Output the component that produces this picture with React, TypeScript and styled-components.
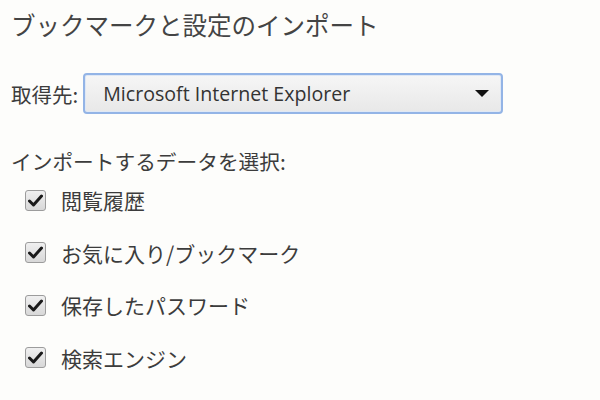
import React from 'react';
import styled, { createGlobalStyle } from 'styled-components';

const GlobalStyle = createGlobalStyle`
    html, body {
        margin:0;
        padding:0;
        background:#fdfdfb;
    }
    body {
        font-family:"Open Sans", "Noto Sans CJK JP", sans-serif;
        color:#3a3a3a;
    }
`;

const Page = styled.div`
    width:600px;
    height:400px;
    box-sizing:border-box;
    padding:9px 0 0 11px;
    overflow:hidden;
`;

const Title = styled.h1`
    margin:0;
    font-size:24.5px;
    font-weight:400;
    line-height:32px;
    color:#444;
    font-family:"Noto Sans CJK JP", sans-serif;
`;

const SourceRow = styled.div`
    display:flex;
    align-items:center;
    gap:5px;
    margin-top:32px;
`;

const Label = styled.span`
    font-size:20.5px;
    line-height:26px;
    font-family:"Noto Sans CJK JP", sans-serif;
    color:#3c3c3c;
`;

const Select = styled.div`
    width:420px;
    height:41px;
    box-sizing:border-box;
    display:flex;
    align-items:center;
    justify-content:space-between;
    padding:0 12px 0 18px;
    border:2px solid #93b4e6;
    border-radius:4px;
    background:linear-gradient(#f6f6f6, #e8e8e8);
    box-shadow:inset 0 0 0 1px #dfe8f5;
    font-size:19.6px;
    color:#333;
    font-family:"Open Sans", sans-serif;
`;

const Caret = styled.span`
    width:0;
    height:0;
    border-left:7px solid transparent;
    border-right:7px solid transparent;
    border-top:7px solid #111;
`;

const Section = styled.div`
    margin-top:34px;
    font-size:20.7px;
    line-height:26px;
    font-family:"Noto Sans CJK JP", sans-serif;
    color:#3c3c3c;
`;

const Items = styled.div`
    display:flex;
    flex-direction:column;
    gap:30.5px;
    margin-top:15px;
    padding-left:14px;
`;

const Item = styled.label`
    display:flex;
    align-items:center;
    gap:15px;
    font-size:21px;
    line-height:22px;
    font-family:"Noto Sans CJK JP", sans-serif;
    color:#3c3c3c;
`;

const Box = styled.span`
    width:21px;
    height:21px;
    box-sizing:border-box;
    border:1px solid #9c9c9c;
    border-radius:3px;
    background:linear-gradient(#f0f0f0, #d8d8d8);
    display:flex;
    align-items:center;
    justify-content:center;
`;

const Check = () => (
    <svg width="15" height="13" viewBox="0 0 15 13">
        <path d="M1.5 7 L5.5 11 L13.5 2" fill="none" stroke="#1a1a1a" strokeWidth="3" strokeLinecap="round" strokeLinejoin="round"/>
    </svg>
);

const items = ['閲覧履歴', 'お気に入り/ブックマーク', '保存したパスワード', '検索エンジン'];

const App = () => {
    return(
        <>
        <GlobalStyle/>
        <Page>
            <Title>ブックマークと設定のインポート</Title>
            <SourceRow>
                <Label>取得先:</Label>
                <Select>
                    <span>Microsoft Internet Explorer</span>
                    <Caret/>
                </Select>
            </SourceRow>
            <Section>インポートするデータを選択:</Section>
            <Items>
                {items.map(name => (
                    <Item key={name}>
                        <Box><Check/></Box>
                        {name}
                    </Item>
                ))}
            </Items>
        </Page>
        </>
    )
}

export default App;
